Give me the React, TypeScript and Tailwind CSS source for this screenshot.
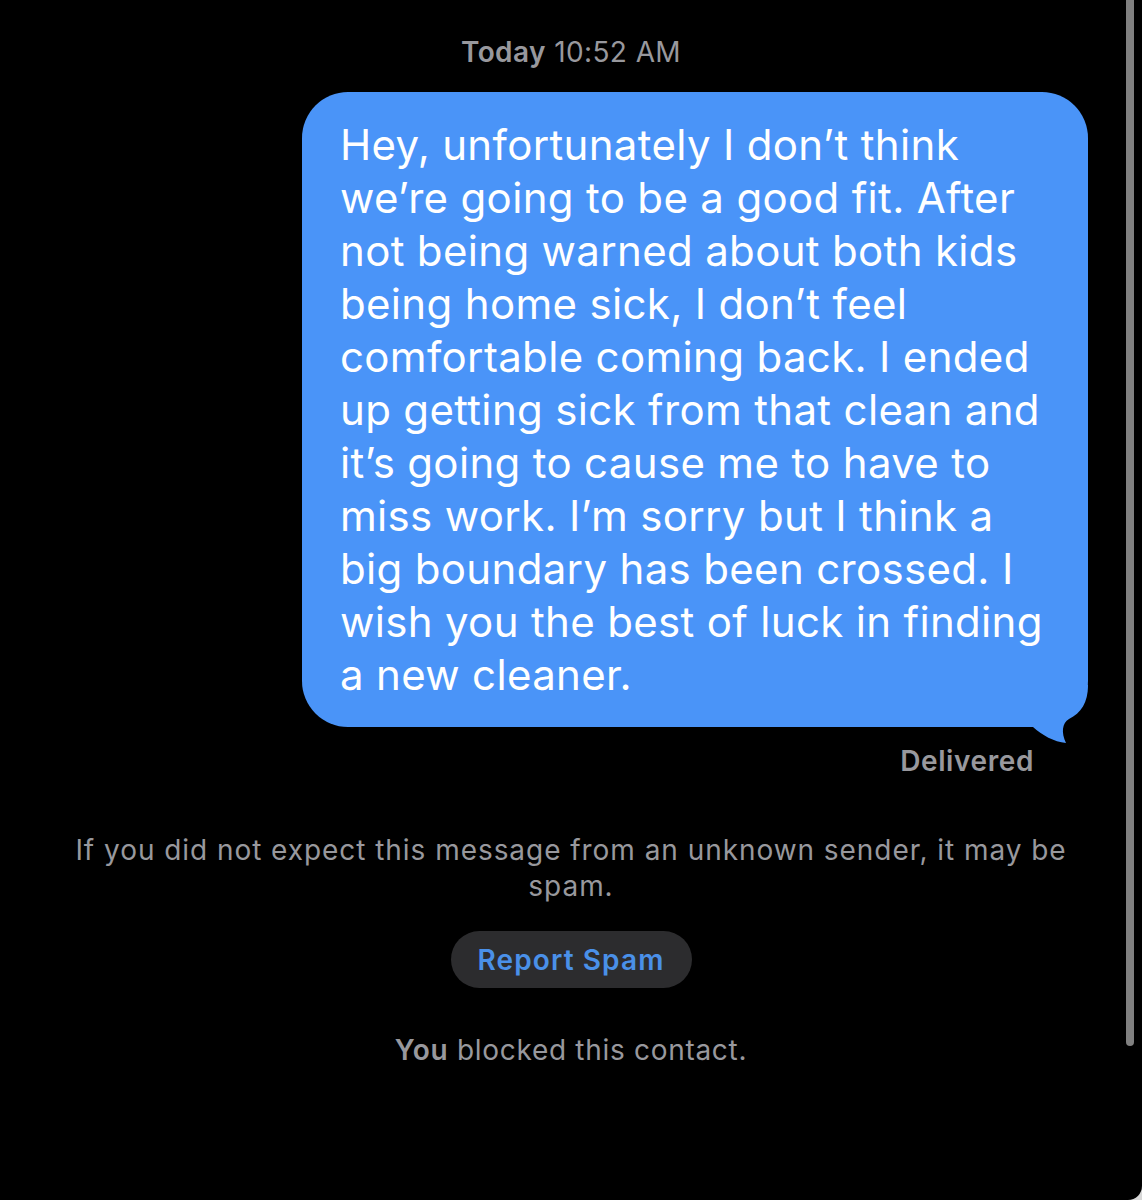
const lines = [
  'Hey, unfortunately I don’t think',
  'we’re going to be a good fit. After',
  'not being warned about both kids',
  'being home sick, I don’t feel',
  'comfortable coming back. I ended',
  'up getting sick from that clean and',
  'it’s going to cause me to have to',
  'miss work. I’m sorry but I think a',
  'big boundary has been crossed. I',
  'wish you the best of luck in finding',
  'a new cleaner.',
];

export default function App() {
  return (
    <div className="relative w-[1142px] h-[1200px] bg-black overflow-hidden font-['Inter','Noto_Sans',sans-serif]">
      {/* Scroll indicator */}
      <div className="absolute right-[8px] top-0 w-[8px] h-[1046px] rounded-b-full bg-[#808080]" />

      {/* Screen corner */}
      <div className="absolute right-0 bottom-0 w-[14px] h-[14px] bg-[#d8d8d8]">
        <div className="w-full h-full bg-black rounded-br-[14px]" />
      </div>

      {/* Timestamp */}
      <div className="pt-[35px] text-center text-[28px] leading-[34px] tracking-[0.4px] text-[#98989d]">
        <span className="font-semibold">Today</span> 10:52 AM
      </div>

      {/* Bubble */}
      <div className="flex justify-end pr-[54px] mt-[23px]">
        <div className="relative w-[786px] rounded-[46px] bg-[#4a94f8] pl-[38px] py-[26px] text-white text-[42px] leading-[53px] tracking-[0.33px]">
          {lines.map((l) => (
            <div key={l} className="whitespace-nowrap">
              {l}
            </div>
          ))}
          {/* Tail */}
          <svg
            className="absolute right-[-1px] bottom-[-16px]"
            width="60"
            height="58"
            viewBox="0 0 60 58"
          >
            <path
              d="M59 0 C59 18 52 28 40 34 C33 38 32 48 37 58 C25 57 13 50 4 42 L0 42 L0 0 Z"
              fill="#4a94f8"
            />
          </svg>
        </div>
      </div>

      {/* Delivered */}
      <div className="flex justify-end pr-[108px] mt-[18px] text-[28px] leading-[32px] font-semibold tracking-[0.6px] text-[#98989d]">
        Delivered
      </div>

      {/* Spam notice */}
      <div className="mt-[55px] px-[40px] text-center text-[28px] leading-[36px] text-[#98989d] tracking-[0.95px]">
        If you did not expect this message from an unknown sender, it may be
        <br />
        spam.
      </div>

      <div className="flex justify-center mt-[27px]">
        <button className="h-[57px] w-[241px] rounded-full bg-[#2c2c2e] text-[28px] font-semibold text-[#4a90e8] tracking-[1.1px]">
          Report Spam
        </button>
      </div>

      <div className="mt-[45px] text-center text-[28px] leading-[34px] text-[#98989d] tracking-[0.7px]">
        <span className="font-semibold">You</span> blocked this contact.
      </div>
    </div>
  );
}
